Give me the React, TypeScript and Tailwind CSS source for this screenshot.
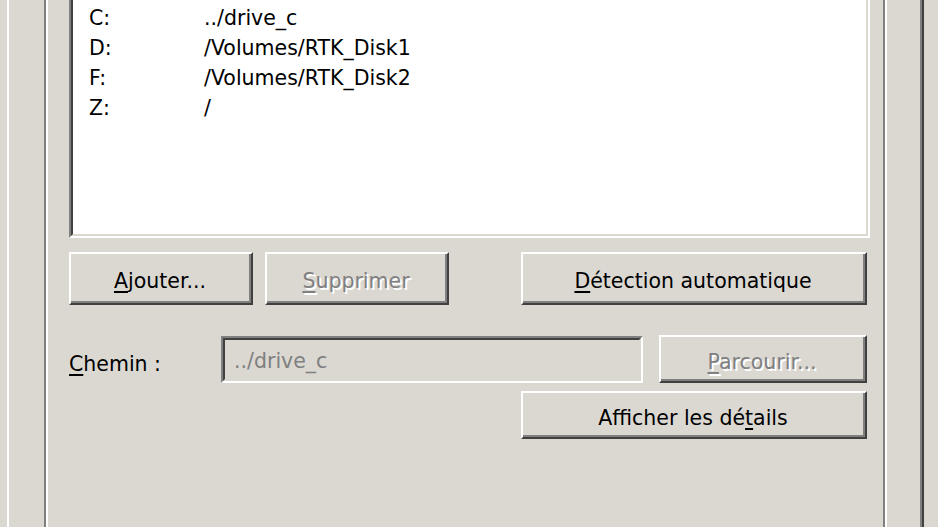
type BtnProps = {
  size: string;
  pre?: string;
  mn: string;
  post?: string;
  disabled?: boolean;
};

const Btn = ({ size, pre = "", mn, post = "", disabled }: BtnProps) => {
  return (
    <div
      className={`${size} shrink-0 border-t-2 border-l-2 border-t-white border-l-white border-b-2 border-r-2 border-b-[#404040] border-r-[#404040]`}
    >
      <div className="h-full border-b-2 border-r-2 border-b-[#808080] border-r-[#808080] flex items-center justify-center pt-[8px]">
        <span
          className={
            disabled
              ? "text-[#808080] [text-shadow:2px_2px_0_#ffffff] whitespace-pre"
              : "text-black whitespace-pre"
          }
        >
          {pre}
          <span className="underline decoration-2 underline-offset-[3px]">{mn}</span>
          {post}
        </span>
      </div>
    </div>
  );
};

const drives = [
  ["C:", "../drive_c"],
  ["D:", "/Volumes/RTK_Disk1"],
  ["F:", "/Volumes/RTK_Disk2"],
  ["Z:", "/"],
];

export default function App() {
  return (
    <div className="w-[938px] h-[527px] overflow-hidden bg-[#dbd8d2] font-['DejaVu_Sans',sans-serif] text-[20.5px] text-black">
      <div className="ml-[7px] w-[917px] h-full border-l-2 border-l-white border-r-2 border-r-[#404040]">
        <div className="h-full border-r-2 border-r-[#808080] pl-[35px]">
          {/* group box, etched */}
          <div className="w-[843px] h-full border-l-2 border-l-[#808080] border-r-2 border-r-white">
            <div className="h-full border-l-2 border-l-white border-r-2 border-r-[#808080] pl-[21px]">
              {/* drive list */}
              <div className="w-[801px] h-[238px] border-l-2 border-l-[#808080] border-r-2 border-r-white border-b-2 border-b-white">
                <div className="h-full bg-white border-l-2 border-l-[#404040] border-r-2 border-r-[#dbd8d2] border-b-2 border-b-[#dbd8d2] pt-[3px] pl-[16px]">
                  {drives.map(([letter, path]) => (
                    <div key={letter} className="flex leading-[30px]">
                      <span className="w-[115px]">{letter}</span>
                      <span>{path}</span>
                    </div>
                  ))}
                </div>
              </div>

              <div className="mt-[14px] flex">
                <Btn size="w-[184px] h-[53px]" mn="A" post="jouter..." />
                <div className="ml-[12px]">
                  <Btn size="w-[184px] h-[53px]" mn="S" post="upprimer" disabled />
                </div>
                <div className="ml-[72px]">
                  <Btn size="w-[346px] h-[53px]" mn="D" post="étection automatique" />
                </div>
              </div>

              <div className="mt-[30px] flex items-start">
                <div className="w-[152px] mt-[17px] leading-[24px]">
                  <span className="underline decoration-2 underline-offset-[3px]">C</span>hemin :
                </div>
                <div className="mt-[1px] w-[422px] h-[47px] border-t-2 border-l-2 border-t-[#808080] border-l-[#808080] border-b-2 border-r-2 border-b-white border-r-white">
                  <div className="h-full border-t-2 border-l-2 border-t-[#404040] border-l-[#404040] border-b-2 border-r-2 border-b-[#dbd8d2] border-r-[#dbd8d2] flex items-center pl-[9px] pt-[3px] leading-[24px] text-[#808080]">
                    ../drive_c
                  </div>
                </div>
                <div className="ml-[16px]">
                  <Btn size="w-[208px] h-[48px]" mn="P" post="arcourir..." disabled />
                </div>
              </div>

              <div className="mt-[8px] ml-[452px]">
                <Btn size="w-[346px] h-[48px]" pre="Afficher les dé" mn="t" post="ails" />
              </div>
            </div>
          </div>
        </div>
      </div>
    </div>
  );
}
